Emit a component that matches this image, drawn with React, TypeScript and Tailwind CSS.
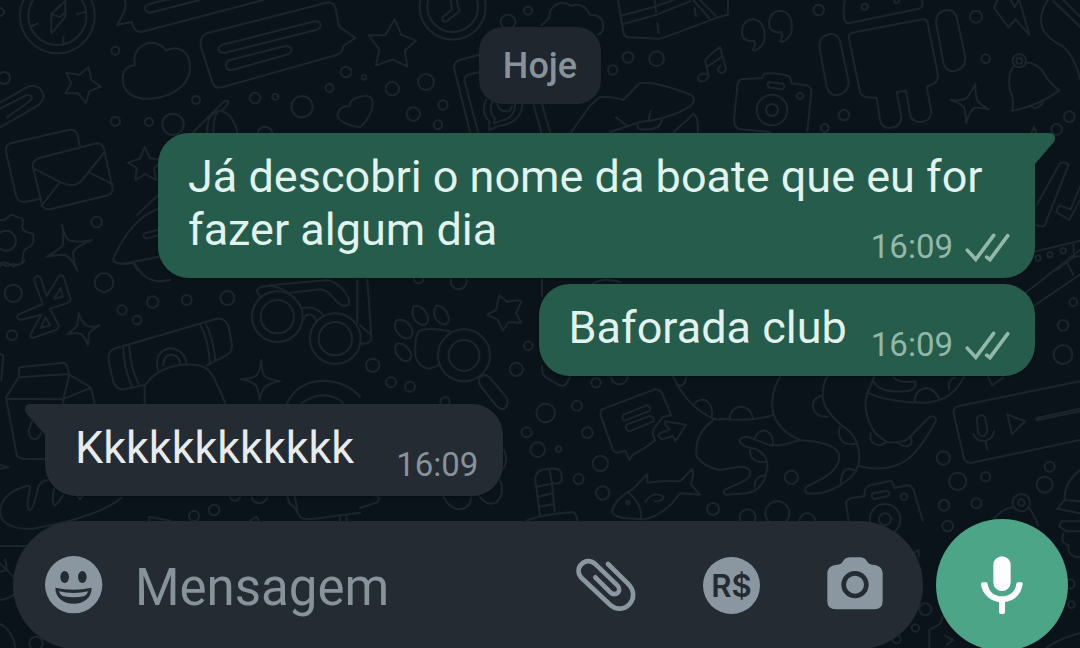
import React from "react";

type Sheet = { x: number; y: number; paths: string[]; dots: [number, number, number][] };

/* Line drawings of the chat wallpaper, in thirds of a pixel from each sheet's corner. */
const sheets: Sheet[] = [
  {
    x: 0,
    y: 0,
    paths: [
      "M196 2L154 42V100L196 50Z M154 42L180 52L196 36 M230 42l26-6 M96 78l18-8 M190 112v22",
      "M374 0Q382 20 368 44L352 74L396 66Q402 98 424 96L790 0 M600 0L450 38Q432 36 436 20Q440 10 520 -4",
      "M620 100L980 8Q1000 4 1006 24L1018 80L1066 114L1030 138Q1030 156 1012 164L666 262Q644 268 636 244L604 144Q596 110 620 100Z",
      "M668 134L944 64Q962 62 962 76Q960 88 948 90L676 158Q658 160 656 148Q656 138 668 134Z M690 180L856 138Q876 138 874 152Q872 160 860 164L696 210Q680 212 678 198Q676 186 690 180Z",
      "M404 196C396 150 430 128 456 128Q486 130 498 152C530 134 572 150 570 206C568 262 500 300 430 296C380 290 366 260 368 228C374 204 390 196 404 196Z",
      "M266 202L274 240L302 260L268 274L258 308L234 280L196 280L214 250L198 218L238 224Z",
      "M0 308L84 260C110 250 132 270 130 294Q126 308 108 320L0 382 M0 326L78 286Q96 284 96 296Q92 304 20 352",
      "M116 598L72 606Q54 606 48 588L18 456Q14 436 32 430L204 390Q226 386 232 404L240 438",
      "M118 474L290 430Q306 430 312 446L338 566Q338 580 324 586L150 628Q130 628 126 614L98 498Q98 480 118 474Z M102 506L184 548Q226 566 248 538L314 456 M180 546L124 618 M268 518L338 552",
      "M434 440L450 474L486 480L462 506L468 540L436 522L406 540L410 504L384 488L420 476Z",
      "M474 586L412 644 M490 622C440 636 388 668 340 776Q342 792 366 792L490 768 M474 690L434 700Q424 710 440 716L474 706 M400 790L412 810",
      "M0 660Q14 664 26 650Q36 640 48 650L66 656Q72 664 66 680Q70 696 90 698L100 704V728L90 740Q68 748 70 764L66 788L40 800Q24 784 4 788L0 800",
      "M186 674Q196 716 206 720Q230 730 276 720Q232 738 220 754Q218 780 232 812Q214 770 192 764Q170 764 140 770Q180 748 188 736Q192 710 186 674Z",
      "M580 396L668 308Q688 296 684 310Q680 320 664 332 M622 398Q618 340 660 332Q700 340 712 398 M640 398Q640 350 652 338",
      "M1080 290Q1050 296 1048 318Q1016 318 1012 344Q1016 372 1080 382",
    ],
    dots: [
      [172, 48, 112], [172, 48, 87], [346, 152, 12], [588, 300, 12], [765, 294, 16], [826, 290, 9], [906, 320, 32],
      [1038, 216, 16], [988, 264, 12], [346, 364, 14], [447, 366, 12], [519, 373, 32], [290, 666, 16], [12, 234, 18],
      [0, 36, 12], [795, 402, 22], [18, 722, 30],
    ],
  },
  {
    x: 360,
    y: 0,
    paths: [
      "M104 58L124 104L168 122L134 152L142 200L98 178L48 196L58 148L26 106L76 106Z",
      "M272 0L276 28L246 54Q248 68 258 64L298 34L290 0",
      "M544 76L568 54C566 10 610 0 634 18Q670 4 690 44Q730 44 730 80Q728 100 714 104",
      "M358 164L300 180Q276 188 284 212L330 396 M358 216L326 224Q310 230 314 244L354 396 M520 312L544 396 M546 312L570 396",
      "M378 300Q362 340 388 364L388 390L414 378Q486 370 488 306 M396 306Q386 340 404 354L402 370L424 362Q466 356 466 306 M412 314Q420 340 450 332L456 318",
      "M774 0L790 96Q792 110 804 112L900 116L920 110L1080 50 M788 46L884 20L940 0 M790 72L890 44L990 4 M884 0L888 36 M892 70L896 100 M1000 0L1052 60 M1020 0L1070 50 M1004 24L1008 48",
      "M1046 228L1036 184Q1034 176 1080 140L1098 208Q1092 222 1080 218Q1066 210 1084 196 M1046 228Q1040 246 1020 244Q1006 232 1024 222Q1036 218 1046 228 M1042 200L1086 170",
      "M634 396L690 318L720 290Q760 290 790 300L838 250Q880 240 996 286Q1010 300 990 320Q920 360 840 366L750 396 M768 352L800 376 M872 332L866 362 M832 374Q830 392 860 388Q900 390 906 360 M942 396L1000 342Q1016 350 1014 396",
      "M0 290Q40 280 38 312Q36 350 0 382",
    ],
    dots: [
      [278, 20, 99], [278, 20, 76], [444, 66, 22], [504, 32, 12], [97, 266, 20], [198, 246, 24], [12, 232, 7],
      [160, 342, 20], [249, 315, 14], [234, 374, 13], [804, 172, 16], [890, 176, 22], [758, 210, 14],
    ],
  },
  {
    x: 720,
    y: 0,
    paths: [
      "M0 50L24 44L24 0",
      "M104 152Q124 144 132 124C138 90 128 60 98 58C64 60 60 100 72 116Q84 126 102 122Q110 132 98 150Z",
      "M186 126Q206 118 214 98C220 64 210 34 180 32C146 34 142 74 154 90Q166 100 184 96Q192 106 180 124Z",
      "M374 0Q364 70 386 70L596 26Q612 22 606 0",
      "M396 98L608 58Q618 56 622 66L654 226Q656 250 620 260L634 336Q632 364 602 366Q576 366 570 344L558 272L530 276L544 350Q544 380 510 384Q484 384 480 360L470 294L444 292Q424 290 420 276L386 112Q386 102 396 98Z",
      "M330 102Q352 100 360 124L386 244Q386 280 350 286Q328 286 320 260L298 140Q298 106 330 102Z",
      "M680 30Q702 28 710 52L736 172Q736 208 700 214Q678 214 670 188L648 68Q648 34 680 30Z",
      "M832 0L822 24L866 82L886 58L928 104L898 0 M872 0L884 22L896 0",
      "M984 0Q956 40 966 80Q974 110 1030 140Q1064 170 1080 236 M1000 4L1080 80 M1030 0L1080 50",
      "M262 394L274 276Q276 262 260 256L214 250Q214 236 206 228Q170 216 132 222L126 234L64 238Q54 240 52 258L42 360Q42 382 60 388L150 396 M148 246L190 252Q198 266 184 268L146 262Q140 250 148 246Z",
      "M882 198Q862 220 870 270Q884 300 876 332Q950 320 1018 272Q980 240 966 210Q940 186 916 188 M932 318Q950 334 970 306",
      "M766 252Q766 290 774 306Q790 318 806 328Q780 322 762 324Q746 340 738 370Q738 340 732 322Q716 306 692 300Q730 302 740 294Q752 280 766 252Z",
      "M934 398L942 380L948 398",
      "M936 640L1020 490Q1034 484 1046 494L974 676Q966 684 940 672 M1080 560L1052 628L1018 616L1008 636L1048 660L1080 600",
      "M930 758L1080 722 M1060 726L1062 770L1080 768 M1010 810L1064 770",
    ],
    dots: [
      [296, 30, 16], [768, 50, 18], [797, 176, 13], [372, 345, 16], [314, 384, 12], [1048, 350, 16], [1010, 388, 16],
      [434, 20, 9], [530, 2, 7], [156, 330, 46], [156, 330, 18], [240, 288, 10], [898, 182, 20], [898, 182, 9],
      [954, 774, 8], [990, 764, 8], [1030, 752, 8],
    ],
  },
  {
    x: 0,
    y: 260,
    paths: [
      "M0 10L20 18L40 12Q66 20 74 0 M340 4Q360 14 396 10 M404 10Q430 62 480 64L510 60",
      "M108 50Q120 44 124 60L140 108L176 50Q186 40 192 54L212 118Q212 126 200 130L150 146L176 196Q176 206 168 210L98 234Q88 232 92 222L124 164L62 180Q46 176 54 164L128 132L104 66Q100 54 108 50Z M182 84L162 116L188 110Z M136 172L122 204L150 196Z",
      "M236 160Q244 184 258 196Q276 204 298 196Q274 210 266 222L264 256Q254 232 244 222Q230 218 202 222Q226 206 232 196Z",
      "M620 316L676 288Q698 276 696 254L686 200Q676 174 650 176L342 266Q322 276 326 304L340 366Q350 390 372 388L436 374 M370 264Q370 320 396 380 M388 258Q390 320 416 372 M600 192Q626 240 630 314 M616 188Q642 240 646 304",
      "M474 330Q460 276 510 264Q556 270 560 314 M490 316Q490 284 516 284Q540 288 540 312 M434 430V378Q480 310 580 314Q620 314 640 350Q660 390 676 430",
      "M56 352L58 322L190 308Q198 308 202 322L208 342L56 352L18 412L50 584Q54 594 70 596L140 598 M18 416L190 418L208 344L272 382L284 430 M192 416L272 384 M190 418V432 M98 480Q78 520 94 534Q116 544 122 520",
      "M0 282L10 286L4 360 M0 614L26 622L0 626",
      "M904 144Q950 136 970 166 M912 176Q916 162 932 164Q950 170 948 190 M776 118L780 108Q760 90 784 80Q850 66 904 140 M870 98L960 88Q980 88 1006 120Q1030 146 1046 134Q1054 120 1030 90Q1000 60 980 60L810 76",
      "M784 300Q786 340 794 348Q810 360 840 364Q806 370 794 382Q786 390 778 420Q776 390 768 376Q750 362 722 358Q756 356 770 346Q780 334 784 300Z",
      "M860 432Q890 364 970 362Q1040 364 1080 410 M904 430Q940 406 970 406Q1010 408 1030 430 M1072 60V190",
      "M150 660Q120 660 114 684Q100 750 90 750Q80 750 84 720L90 684Q90 676 80 678Q0 700 0 760Q10 810 100 806Q300 770 366 712 M166 676Q150 730 166 736Q180 724 188 706 M230 706L240 718L250 706",
      "M448 784V770L510 782 M750 782L770 770L776 782 M862 708Q866 734 882 740L900 770Q910 782 960 774L1080 758 M884 708L892 750 M1020 784V770 M1040 784V768",
    ],
    dots: [
      [40, 100, 26], [312, 68, 28], [366, 150, 14], [411, 180, 13], [458, 126, 17], [560, 120, 15], [682, 114, 21],
      [36, 226, 15], [705, 706, 16], [778, 706, 24], [642, 750, 16], [582, 768, 15], [832, 170, 50], [832, 170, 76],
      [1006, 236, 50], [1006, 236, 76],
    ],
  },
  {
    x: 360,
    y: 260,
    paths: [
      "M22 60L34 230Q34 246 20 250L0 252 M0 196L30 222",
      "M418 106L442 126Q480 116 484 126L468 160L484 188L446 186L428 212L412 178L382 164L408 150Z",
      "M160 140Q186 130 202 166Q210 196 184 194Q150 180 160 140Z M228 138Q254 134 266 172Q268 200 242 190Q212 170 228 138Z M108 182Q140 170 158 212Q158 240 132 234Q96 214 108 182Z M108 252Q136 244 154 282Q154 308 130 302Q98 284 108 252Z",
      "M270 214Q200 200 176 214Q164 230 166 290Q180 326 210 326Q230 320 240 312",
      "M360 352Q376 340 386 350L438 410Q450 430 434 446Q420 450 408 436L360 376Q354 360 360 352Z",
      "M546 58V110 M546 318Q544 344 560 354L600 376Q616 382 624 362L632 346",
      "M726 448L884 388Q902 388 908 404L934 466Q920 468 908 472L886 500Q870 520 886 540Q850 570 820 582L808 600L796 572L770 578Q760 576 756 562L722 466Q720 454 726 448Z",
      "M790 464L860 436Q874 440 870 452L796 482Q782 480 790 464Z M800 494L868 468Q886 470 880 484L808 514Q792 510 800 494Z",
      "M916 484L978 494L946 544L938 528L906 538Q892 530 898 520L930 508L916 496Z",
      "M700 70Q730 50 780 66 M940 350Q980 440 1060 476L1080 480 M950 376Q974 384 978 352 M1000 436Q1010 416 1036 420Q1060 436 1056 470 M1066 476Q1000 520 1010 590Q1030 620 1080 630",
      "M540 768L526 660Q526 628 560 628Q600 620 604 640L606 660Q600 674 576 670L584 754 M568 628L576 668 M530 680L570 672 M534 710L578 700 M538 740L580 732 M500 782Q540 764 640 756Q650 762 652 782",
      "M756 758Q760 720 820 686L862 642V668Q910 660 960 664L996 628Q1004 640 992 672L1020 704L960 700Q910 770 850 778L790 774Q762 768 756 758Z M806 698Q850 736 842 778 M856 726Q880 690 910 710Q910 724 884 724",
      "M250 710Q270 748 300 748Q330 746 334 710 M352 700Q380 744 410 726Q436 700 420 660 M432 570Q446 600 430 626 M0 744L50 728Q70 712 40 704",
    ],
    dots: [
      [296, 64, 24], [176, 56, 14], [38, 316, 20], [93, 367, 15], [150, 380, 15], [255, 425, 14], [505, 257, 13],
      [469, 328, 20], [557, 459, 28], [651, 437, 15], [682, 518, 16], [500, 517, 15], [533, 569, 22], [596, 567, 8],
      [721, 610, 23], [656, 657, 15], [728, 699, 20], [1059, 747, 18], [708, 368, 14], [778, 348, 25], [312, 286, 78],
      [312, 286, 46], [804, 728, 5],
    ],
  },
  {
    x: 720,
    y: 260,
    paths: [
      "M0 476Q90 486 158 466 M28 476Q34 440 64 440Q92 442 98 472",
      "M180 350Q140 420 168 480Q190 520 240 540Q340 546 356 580Q366 620 310 654L260 680Q250 690 260 700Q310 706 360 676Q420 640 418 590Q416 530 370 500Q310 450 308 410Q308 370 322 350",
      "M240 540Q180 560 150 556L82 530Q60 530 58 544Q64 560 110 568Q150 590 140 634Q130 690 80 700L20 704Q4 700 16 688L70 664Q96 650 90 634Q80 616 50 622L0 630",
      "M104 534Q116 510 136 512Q160 520 160 554 M90 570Q90 610 136 606 M104 680Q104 646 138 646 M304 408Q278 414 278 440Q284 472 324 470 M360 500Q350 530 372 548Q390 556 408 550 M362 670Q366 624 386 626L410 632",
      "M418 618Q500 640 560 600Q600 570 648 482Q648 466 630 470L560 540Q540 550 500 546L466 520Q420 450 446 390L462 352 M446 400Q520 430 620 428Q700 420 732 350",
      "M584 424Q584 390 616 384Q644 386 656 414 M452 520Q446 554 480 556L500 546 M530 546Q560 570 574 550L574 530 M520 352Q540 372 586 364Q590 390 560 394Q480 400 462 366 M688 388Q680 360 706 352 M804 350L816 376L850 352",
      "M1080 364L716 438Q696 444 702 464L732 596Q738 610 756 608L1080 540",
      "M770 474Q786 458 796 474L802 510Q798 530 786 528Q776 528 774 512Z M760 522Q770 546 796 542Q820 536 822 514 M796 542L802 570 M862 464L916 484L876 522Z M1080 446L950 474Q948 482 954 480L1080 454",
      "M900 112L1080 -30 M930 146L1080 44 M1040 6L1060 44",
      "M386 784L378 730Q380 716 396 714L434 708Q430 684 450 676L512 662Q522 670 522 684L562 676Q580 678 584 700L608 782 M458 700L500 692Q514 700 504 708L462 718Q450 708 458 700Z",
      "M820 778Q850 742 884 742 M926 742Q940 760 954 796",
      "M1080 630Q1030 670 1034 720L1012 746L1080 760 M1034 720L1080 724 M1080 784H1024L1018 800L1040 814H1080",
    ],
    dots: [
      [670, 594, 20], [713, 664, 26], [797, 650, 14], [989, 620, 15], [974, 674, 24], [672, 736, 16], [769, 730, 15],
      [683, 798, 16], [214, 652, 20], [83, 772, 24], [172, 760, 36], [262, 784, 24], [1029, 196, 16], [1060, 127, 12],
      [1029, 284, 28], [495, 778, 46], [495, 778, 18], [552, 710, 10], [904, 728, 26], [904, 728, 10],
    ],
  },
  {
    x: 800,
    y: 500,
    paths: [
      "M388 443V390L420 372L428 350 M436 408L460 420L440 434 M740 443Q790 410 840 400 M340 160L356 150V170 M790 100Q780 130 806 136Q800 170 840 172",
    ],
    dots: [[376, 328, 18], [346, 384, 11], [290, 418, 12], [810, 252, 14], [814, 314, 10]],
  },
  {
    x: 0,
    y: 500,
    paths: ["M0 138H90 M0 190L40 230 M16 178L20 210L0 216 M0 300Q30 296 44 280 M0 372Q36 390 46 443"],
    dots: [[108, 430, 20]],
  },
];

function Wallpaper() {
  return (
    <svg
      aria-hidden="true"
      className="pointer-events-none absolute inset-0 h-full w-full"
      viewBox="0 0 1080 648"
      preserveAspectRatio="xMidYMid slice"
      fill="none"
      stroke="#1b252b"
      strokeWidth="6"
      strokeLinecap="round"
      strokeLinejoin="round"
    >
      {sheets.map((s, i) => (
        <g key={i} transform={`translate(${s.x} ${s.y}) scale(0.33333)`}>
          {s.paths.map((d, j) => (
            <path key={j} d={d} />
          ))}
          {s.dots.map(([cx, cy, r], j) => (
            <circle key={j} cx={cx} cy={cy} r={r} />
          ))}
        </g>
      ))}
    </svg>
  );
}

function Ticks() {
  return (
    <svg className="h-[29px] w-[45px]" viewBox="735 694 135 88" fill="none" stroke="#92b8aa" strokeWidth="11" strokeLinecap="round" role="img" aria-label="Entregue">
      <path d="M741 746L767 774L821 701" />
      <path d="M800 767L810 775L864 702" />
    </svg>
  );
}

type MessageProps = { text: string; time: string; mine?: boolean; tail?: boolean };

function Message({ text, time, mine, tail }: MessageProps) {
  const side = mine ? "self-end bg-[#265c4b] text-[#e0f3ee]" : "self-start bg-[#242b32] text-[#e7ebee]";
  const corner = tail ? (mine ? "rounded-tr-none" : "rounded-tl-none") : "";
  return (
    <li className={`relative flow-root max-w-[877px] rounded-[31px] pt-[17px] pr-[25px] pb-[11px] pl-[30px] shadow-[0_1px_2px_rgba(0,0,0,0.4)] ${side} ${corner}`}>
      {tail && (
        <svg
          aria-hidden="true"
          className={`absolute top-0 h-[31px] w-5 ${mine ? "left-full text-[#265c4b]" : "right-full -scale-x-100 text-[#242b32]"}`}
          viewBox="0 0 20 31"
          fill="currentColor"
        >
          <path d="M0 0H14Q20 0 20 5Q20 8 18 10L0 31Z" />
        </svg>
      )}
      <span className="text-[45px] leading-[53px]">{text}</span>
      <span className={`float-right mt-6 flex items-center gap-3 text-[33px] leading-10 ${mine ? "ml-6 text-[#92b8aa]" : "ml-[42px] text-[#87929b]"}`}>
        <time>{time}</time>
        {mine && <Ticks />}
      </span>
    </li>
  );
}

function SmileIcon() {
  return (
    <svg className="size-[58px]" viewBox="0 0 174 174" aria-hidden="true">
      <circle cx="86" cy="86" r="86" fill="#8a96a0" />
      <g fill="#242b32">
        <ellipse cx="59" cy="63" rx="13" ry="18" />
        <ellipse cx="112" cy="63" rx="13" ry="18" />
        <path d="M31 95Q86 107 140 95C140 125 117 143 86 143S31 125 31 95Z" />
      </g>
      <path d="M41 106Q86 116 130 106Q126 116 119 120Q86 128 53 120Q45 116 41 106Z" fill="#8a96a0" />
    </svg>
  );
}

function ClipIcon() {
  return (
    <svg className="h-[54px] w-[60px]" viewBox="80 174 180 162" fill="none" stroke="#8a96a0" strokeWidth="14" strokeLinecap="round" aria-hidden="true">
      <path d="M176 192L238 253C256 272 255 296 241 312C225 330 200 330 183 315L97 234C85 222 85 205 95 194C107 180 126 180 139 193L204 256C212 264 210 273 206 278C200 284 190 284 184 278L138 232" />
    </svg>
  );
}

function CameraIcon() {
  return (
    <svg className="h-[58px] w-14" viewBox="80 169 168 174" aria-hidden="true">
      <path
        d="M148 173H180C192 174 198 180 202 188Q206 195 216 195C236 195 247 206 247 222V304Q247 329 222 329H106Q81 329 81 304V222C81 206 92 195 112 195Q122 195 126 188C130 180 136 174 148 173Z"
        fill="#8a96a0"
      />
      <circle cx="164" cy="255" r="34" fill="none" stroke="#242b32" strokeWidth="14" />
    </svg>
  );
}

function MicIcon() {
  return (
    <svg className="h-[58px] w-[42px]" viewBox="543 168 126 174" aria-hidden="true">
      <rect x="580" y="169" width="52" height="104" rx="26" fill="#fff" />
      <path d="M543 252Q543 247 548 247H559Q562 247 563 252C566 276 584 289 606 289S646 276 649 252Q650 247 653 247H664Q669 247 668 252C665 281 644 302 615 306V336Q615 342 610 342H602Q597 342 597 336V306C568 302 546 281 543 252Z" fill="#fff" />
    </svg>
  );
}

export default function App() {
  return (
    <main className="relative flex h-screen flex-col overflow-hidden bg-[#0b131a] font-['Roboto','Liberation_Sans',sans-serif]">
      <Wallpaper />
      <section className="relative flex flex-col px-[45px] pt-[27px]">
        <h2 className="mb-[29px] self-center rounded-3xl bg-[#1f262d] px-6 pt-[18px] pb-4 text-[36px] leading-[43px] font-medium text-[#87929b]">Hoje</h2>
        <ol className="flex flex-col">
          <Message mine tail text="Já descobri o nome da boate que eu for fazer algum dia" time="16:09" />
          <li className="h-[6px]" aria-hidden="true" />
          <Message mine text="Baforada club" time="16:09" />
          <li className="h-7" aria-hidden="true" />
          <Message tail text="Kkkkkkkkkkkk" time="16:09" />
        </ol>
      </section>
      <form className="relative mt-[23px] flex shrink-0 items-center gap-[13px] pr-3 pl-[13px]" onSubmit={(e) => e.preventDefault()}>
        <div className="flex h-32 min-w-0 flex-1 items-center rounded-full bg-[#242b32] pr-10 pl-8">
          <button type="button" aria-label="Emojis" className="shrink-0">
            <SmileIcon />
          </button>
          <input
            type="text"
            aria-label="Mensagem"
            placeholder="Mensagem"
            className="ml-8 min-w-0 flex-1 bg-transparent pt-[6px] text-[51px] leading-[60px] text-[#e7ebee] outline-none placeholder:text-[#87929b]"
          />
          <div className="flex shrink-0 items-center gap-[67px]">
            <button type="button" aria-label="Anexar">
              <ClipIcon />
            </button>
            <button
              type="button"
              aria-label="Pagamento"
              className="flex size-[57px] items-center justify-center rounded-full bg-[#8a96a0] font-['Inter','Roboto',sans-serif] text-[31px] leading-none font-semibold text-[#242b32]"
            >
              R$
            </button>
            <button type="button" aria-label="Câmera">
              <CameraIcon />
            </button>
          </div>
        </div>
        <button type="button" aria-label="Gravar áudio" className="flex size-[132px] shrink-0 items-center justify-center rounded-full bg-[#4da587]">
          <MicIcon />
        </button>
      </form>
    </main>
  );
}
